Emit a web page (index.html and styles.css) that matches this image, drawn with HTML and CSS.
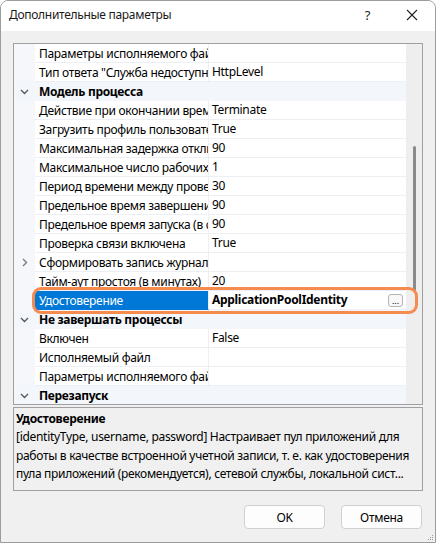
FILE: index.html
```html
<!DOCTYPE html>
<html lang="ru">
<head>
<meta charset="utf-8">
<title>Дополнительные параметры</title>
<link rel="stylesheet" href="styles.css">
</head>
<body>
<div class="window">
  <div class="titlebar">
    <span class="title">Дополнительные параметры</span>
    <span class="help">?</span>
    <svg class="close" width="12" height="12" viewBox="0 0 12 12"><path d="M1 1L11 11M11 1L1 11" stroke="#222" stroke-width="1.1" fill="none"/></svg>
  </div>

  <div class="content">
    <div class="grid">
      <div class="rows">
        <div class="row"><span class="gut"></span><span class="lbl">Параметры исполняемого файла</span><span class="val"></span></div>
        <div class="row"><span class="gut"></span><span class="lbl">Тип ответа "Служба недоступна"</span><span class="val">HttpLevel</span></div>
        <div class="cat"><span class="gut"><svg width="9" height="6" viewBox="0 0 9 6"><path d="M1 1L4.5 4.5L8 1" stroke="#555" stroke-width="1.3" fill="none"/></svg></span><span class="cat-name">Модель процесса</span></div>
        <div class="row"><span class="gut"></span><span class="lbl">Действие при окончании времени простоя</span><span class="val">Terminate</span></div>
        <div class="row"><span class="gut"></span><span class="lbl">Загрузить профиль пользователя</span><span class="val">True</span></div>
        <div class="row"><span class="gut"></span><span class="lbl">Максимальная задержка отклика проверки связи</span><span class="val">90</span></div>
        <div class="row"><span class="gut"></span><span class="lbl">Максимальное число рабочих процессов</span><span class="val">1</span></div>
        <div class="row"><span class="gut"></span><span class="lbl">Период времени между проверками связи</span><span class="val">30</span></div>
        <div class="row"><span class="gut"></span><span class="lbl">Предельное время завершения работы</span><span class="val">90</span></div>
        <div class="row"><span class="gut"></span><span class="lbl">Предельное время запуска (в секундах)</span><span class="val">90</span></div>
        <div class="row"><span class="gut"></span><span class="lbl">Проверка связи включена</span><span class="val">True</span></div>
        <div class="row"><span class="gut"><svg width="6" height="9" viewBox="0 0 6 9"><path d="M1 1L4.5 4.5L1 8" stroke="#777" stroke-width="1.3" fill="none"/></svg></span><span class="lbl">Сформировать запись журнала</span><span class="val"></span></div>
        <div class="row"><span class="gut"></span><span class="lbl">Тайм-аут простоя (в минутах)</span><span class="val">20</span></div>
        <div class="row selected"><span class="gut"></span><span class="lbl">Удостоверение</span><span class="val"><b>ApplicationPoolIdentity</b><span class="dots">...</span></span></div>
        <div class="cat"><span class="gut"><svg width="9" height="6" viewBox="0 0 9 6"><path d="M1 1L4.5 4.5L8 1" stroke="#555" stroke-width="1.3" fill="none"/></svg></span><span class="cat-name">Не завершать процессы</span></div>
        <div class="row"><span class="gut"></span><span class="lbl">Включен</span><span class="val">False</span></div>
        <div class="row"><span class="gut"></span><span class="lbl">Исполняемый файл</span><span class="val"></span></div>
        <div class="row"><span class="gut"></span><span class="lbl">Параметры исполняемого файла</span><span class="val"></span></div>
        <div class="cat"><span class="gut"><svg width="9" height="6" viewBox="0 0 9 6"><path d="M1 1L4.5 4.5L8 1" stroke="#555" stroke-width="1.3" fill="none"/></svg></span><span class="cat-name">Перезапуск</span></div>
      </div>
      <div class="scrollbar"><div class="thumb"></div></div>
      <div class="focus-ring"></div>
    </div>

    <div class="desc">
      <div class="desc-title">Удостоверение</div>
      <div class="desc-line">[identityType, username, password] Настраивает пул приложений для</div>
      <div class="desc-line">работы в качестве встроенной учетной записи, т. е. как удостоверения</div>
      <div class="desc-line">пула приложений (рекомендуется), сетевой службы, локальной сист...</div>
    </div>

    <div class="footer">
      <button class="btn">OK</button>
      <button class="btn">Отмена</button>
    </div>
  </div>
  <svg class="grip" width="7" height="7" viewBox="0 0 7 7">
    <rect x="5" y="1" width="1" height="1" fill="#999"/>
    <rect x="3" y="3" width="1" height="1" fill="#999"/>
    <rect x="5" y="3" width="1" height="1" fill="#999"/>
    <rect x="1" y="5" width="1" height="1" fill="#999"/>
    <rect x="3" y="5" width="1" height="1" fill="#999"/>
    <rect x="5" y="5" width="1" height="1" fill="#999"/>
  </svg>
</div>
</body>
</html>
```

FILE: styles.css
```css
* { box-sizing: border-box; }

html, body {
  margin: 0;
  padding: 0;
  background: #ffffff;
}

body {
  font-family: "Noto Sans", "Open Sans", sans-serif;
  font-size: 12px;
  letter-spacing: -0.3px;
  color: #000;
}

.window {
  position: relative;
  width: 436px;
  height: 543px;
  border: 1px solid #9c9c9c;
  border-radius: 8px 8px 0 0;
  background: #f0f0f0;
  overflow: hidden;
}

/* title bar */
.titlebar {
  height: 30px;
  background: #ffffff;
  display: flex;
  align-items: center;
  padding-left: 8px;
  padding-bottom: 3px;
}

.title {
  flex: 1;
  font-size: 12px;
  color: #1a1a1a;
}

.help {
  font-size: 13px;
  color: #222;
  margin-right: 36px;
}

.close {
  margin-right: 17px;
}

/* dialog body */
.content {
  padding: 12px 12px 0 12px;
}

.grid {
  position: relative;
  height: 362px;
  border: 1px solid #a0a0a0;
  display: flex;
  background: #ffffff;
}

.rows {
  flex: 1;
  overflow: hidden;
}

.row, .cat {
  display: grid;
  grid-template-columns: 21px 174px 1fr;
  height: 19px;
  line-height: 20px;
}

.gut {
  background: #f5f7fa;
  display: flex;
  align-items: center;
  justify-content: center;
}

.row .lbl, .row .val {
  border-bottom: 1px solid #eceff3;
  white-space: nowrap;
  overflow: hidden;
}

.row .lbl {
  padding-left: 4px;
  border-right: 1px solid #eceff3;
}

.row .val {
  padding-left: 3px;
  display: flex;
  align-items: center;
}

.cat {
  background: #f3f6fa;
}

.cat .gut {
  background: transparent;
}

.cat-name {
  grid-column: 2 / 4;
  padding-left: 4px;
  font-weight: bold;
}

.selected .lbl {
  background: #0078d7;
  color: #ffffff;
  border-bottom-color: #0078d7;
}

.selected .val b {
  flex: 1;
}

.dots {
  width: 15px;
  height: 13px;
  margin-right: 3px;
  margin-top: 1px;
  border: 1px solid #b4b4b4;
  border-radius: 3px;
  background: #f8f8f8;
  font-size: 9px;
  line-height: 12px;
  letter-spacing: 0;
  text-align: center;
}

.scrollbar {
  width: 16px;
  background: #eeeeee;
  position: relative;
}

.thumb {
  position: absolute;
  left: 7px;
  top: 102px;
  width: 3px;
  height: 146px;
  background: #8a8a8a;
  border-radius: 2px;
}

.focus-ring {
  position: absolute;
  left: 18px;
  top: 243px;
  width: 386px;
  height: 27px;
  border: 3px solid #f58b4e;
  border-radius: 9px;
}

/* description panel */
.desc {
  margin-top: 2px;
  height: 84px;
  border: 1px solid #a0a0a0;
  padding: 2px 2px 0 2px;
  line-height: 18.5px;
}

.desc-title {
  font-weight: bold;
  line-height: 18px;
}

.desc-line {
  white-space: nowrap;
  overflow: hidden;
}

/* buttons */
.footer {
  display: flex;
  justify-content: flex-end;
  gap: 16px;
  margin-top: 14px;
  padding-right: 1px;
}

.btn {
  width: 81px;
  height: 24px;
  border: 1px solid #d0d0d0;
  border-radius: 4px;
  background: #fdfdfd;
  font-family: inherit;
  font-size: 12px;
  letter-spacing: -0.3px;
  color: #000;
  padding: 0;
}

.grip {
  position: absolute;
  right: 1px;
  bottom: 1px;
}
```
